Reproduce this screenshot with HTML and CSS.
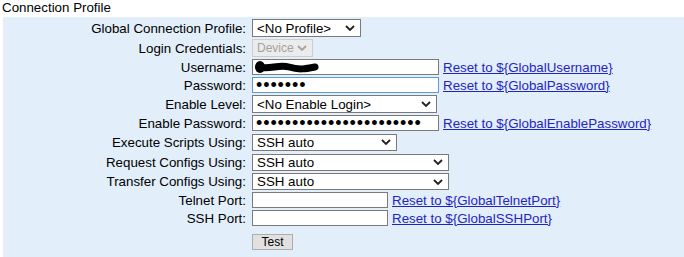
FILE: index.html
```html
<!DOCTYPE html>
<html lang="en">
<head>
    <meta charset="UTF-8">
    <title>Connection Profile</title>
    <link rel="stylesheet" href="styles.css">
</head>
<body>

    <div class="title">Connection Profile</div>

    <div class="panel">
        <div class="row">
            <label>Global Connection Profile:</label>
            <div class="select" style="width: 109px">
                <span>&lt;No Profile&gt;</span>
                <svg width="10" height="6" viewBox="0 0 10 6"><path d="M1 1 L5 5 L9 1" /></svg>
            </div>
        </div>
        <div class="row">
            <label>Login Credentials:</label>
            <div class="select disabled" style="width: 61px">
                <span>Device</span>
                <svg width="10" height="6" viewBox="0 0 10 6"><path d="M1 1 L5 5 L9 1" /></svg>
            </div>
        </div>
        <div class="row short">
            <label>Username:</label>
            <div class="field">
                <input type="text" class="wide" value="">
                <!-- redacted value -->
                <svg class="scribble" width="68" height="16" viewBox="0 0 68 16">
                    <ellipse cx="7" cy="8" rx="5" ry="6" />
                    <path d="M6 8 C16 11 26 5 36 8 S52 10 62 8" />
                </svg>
            </div>
            <a href="#">Reset to ${GlobalUsername}</a>
        </div>
        <div class="row short">
            <label>Password:</label>
            <div class="dots wide focus">&bull;&bull;&bull;&bull;&bull;&bull;&bull;</div>
            <a href="#">Reset to ${GlobalPassword}</a>
        </div>
        <div class="row">
            <label>Enable Level:</label>
            <div class="select" style="width: 185px">
                <span>&lt;No Enable Login&gt;</span>
                <svg width="10" height="6" viewBox="0 0 10 6"><path d="M1 1 L5 5 L9 1" /></svg>
            </div>
        </div>
        <div class="row short">
            <label>Enable Password:</label>
            <div class="dots wide">&bull;&bull;&bull;&bull;&bull;&bull;&bull;&bull;&bull;&bull;&bull;&bull;&bull;&bull;&bull;&bull;&bull;&bull;&bull;&bull;&bull;&bull;&bull;</div>
            <a href="#">Reset to ${GlobalEnablePassword}</a>
        </div>
        <div class="row">
            <label>Execute Scripts Using:</label>
            <div class="select low" style="width: 145px">
                <span>SSH auto</span>
                <svg width="10" height="6" viewBox="0 0 10 6"><path d="M1 1 L5 5 L9 1" /></svg>
            </div>
        </div>
        <div class="row">
            <label>Request Configs Using:</label>
            <div class="select low" style="width: 197px">
                <span>SSH auto</span>
                <svg width="10" height="6" viewBox="0 0 10 6"><path d="M1 1 L5 5 L9 1" /></svg>
            </div>
        </div>
        <div class="row mid">
            <label>Transfer Configs Using:</label>
            <div class="select low" style="width: 197px">
                <span>SSH auto</span>
                <svg width="10" height="6" viewBox="0 0 10 6"><path d="M1 1 L5 5 L9 1" /></svg>
            </div>
        </div>
        <div class="row short">
            <label>Telnet Port:</label>
            <input type="text" class="narrow" value="">
            <a href="#">Reset to ${GlobalTelnetPort}</a>
        </div>
        <div class="row short">
            <label>SSH Port:</label>
            <input type="text" class="narrow" value="">
            <a href="#">Reset to ${GlobalSSHPort}</a>
        </div>
        <div class="row buttons">
            <label></label>
            <button>Test</button>
        </div>
    </div>

</body>
</html>
```

FILE: styles.css
```css
body {
    font-family: "Liberation Sans", Arial, sans-serif;
    font-size: 13.33px;
    margin: 0;
    padding: 0;
    color: #000;
    background-color: #fff;
}

.title {
    height: 17px;
    line-height: 16px;
    padding-left: 2px;
}

.panel {
    margin-left: 3px;
    padding-top: 1px;
    padding-bottom: 7px;
    background-color: #e2eef9;
}

.row {
    display: flex;
    align-items: center;
    height: 20px;
}

.row.short {
    height: 18px;
}

.row.mid {
    height: 19px;
}

.row label {
    width: 243px;
    margin-right: 6px;
    text-align: right;
    flex-shrink: 0;
}

.row a {
    margin-left: 4px;
    color: #1f25c4;
}

.select {
    box-sizing: border-box;
    height: 18px;
    display: flex;
    align-items: center;
    justify-content: space-between;
    padding: 0 5px 0 4px;
    background-color: #fff;
    border: 1px solid #7a7a7a;
    white-space: nowrap;
}

.select svg {
    flex-shrink: 0;
}

.select.low {
    height: 17px;
}

.select svg path {
    fill: none;
    stroke: #222;
    stroke-width: 1.8;
}

.select.disabled {
    background-color: #ececec;
    border-color: #cdcdcd;
    color: #a2a2a2;
    font-size: 12px;
    padding: 0 5px 0 4px;
}

.select.disabled svg path {
    stroke: #a2a2a2;
}

input {
    box-sizing: border-box;
    height: 16px;
    margin: 0;
    padding: 0 3px;
    font: inherit;
    background-color: #fff;
    border: 1px solid #7a7a7a;
    border-radius: 0;
    outline: none;
}

.wide {
    width: 187px;
}

.narrow {
    width: 136px;
}

.field {
    position: relative;
    display: flex;
}

.scribble {
    position: absolute;
    left: 1px;
    top: 0;
}

.scribble ellipse {
    fill: #000;
}

.scribble path {
    fill: none;
    stroke: #000;
    stroke-width: 7;
    stroke-linecap: round;
}

.dots {
    box-sizing: border-box;
    height: 16px;
    padding-left: 3px;
    background-color: #fff;
    border: 1px solid #7a7a7a;
    font-size: 18px;
    line-height: 14px;
    letter-spacing: 0.9px;
    white-space: nowrap;
}

.dots.focus {
    border-color: #5d9ccc;
}

.row.buttons {
    height: 16px;
    padding-top: 7px;
}

button {
    box-sizing: border-box;
    width: 41px;
    height: 16px;
    padding: 0;
    font-family: inherit;
    font-size: 12px;
    line-height: 14px;
    color: #000;
    background-color: #e1e1e1;
    border: 1px solid #adadad;
    border-radius: 0;
}
```
